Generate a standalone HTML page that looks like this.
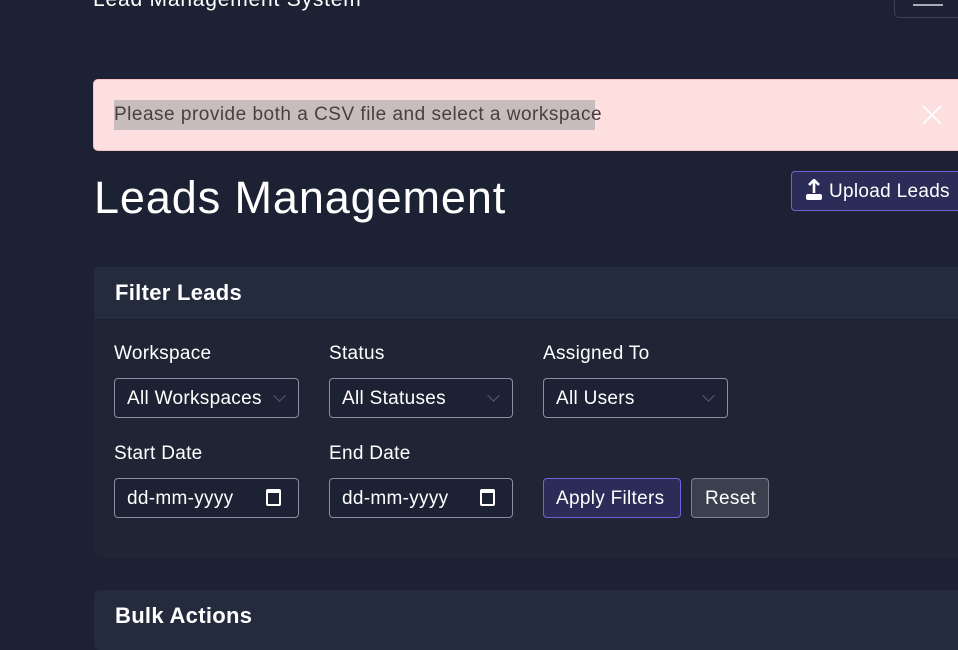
<!DOCTYPE html>
<html><head><style>
*{box-sizing:border-box;margin:0;padding:0}
body{width:958px;height:637px;overflow:hidden;background:#1c2233;font-family:"Liberation Sans",sans-serif;color:#fff;position:relative;letter-spacing:0.3px}
.abs{position:absolute}
.sel,.inp{position:absolute;height:40px;border:1px solid #8a90a0;border-radius:4px;background:#1c2233;font-size:19px;color:#fff;padding:9px 12px;white-space:nowrap;overflow:hidden}
.lbl{position:absolute;font-size:19px;color:#fff}
.chev{position:absolute;right:14px;top:12px;width:9px;height:9px;border-right:1.5px solid #555c6b;border-bottom:1.5px solid #555c6b;transform:rotate(45deg)}
.cal{position:absolute;right:17px;top:10px;width:15px;height:17px;border:2px solid #fff;border-top-width:4px;border-radius:2px}
</style></head><body>
<div class="abs" style="left:93px;top:-12px;font-size:21px;letter-spacing:0.8px">Lead Management System</div>
<div class="abs" style="left:894px;top:-20px;width:80px;height:38px;border:1px solid #3a4152;border-radius:5px"></div>
<div class="abs" style="left:913px;top:4px;width:30px;height:2px;background:#aab"></div>
<div class="abs" style="left:93px;top:79px;width:880px;height:72px;background:#fddfe0;border:1px solid #f3c2c5;border-radius:5px"></div>
<div class="abs" style="left:114px;top:100px;height:30px;width:481px;background:#c8bcbc;color:#4a3f3f;font-size:19px;padding-top:4px;letter-spacing:0.5px;white-space:nowrap">Please provide both a CSV file and select a workspace</div>
<svg class="abs" style="left:922px;top:105px" width="20" height="20" viewBox="0 0 20 20"><path d="M1 1L19 19M19 1L1 19" stroke="#fff" stroke-width="1.6"/></svg>
<div class="abs" style="left:94px;top:172px;font-size:45px;letter-spacing:0.9px">Leads Management</div>
<div class="abs" style="left:791px;top:171px;width:180px;height:40px;background:#2c2c58;border:1px solid #6e64d8;border-radius:4px;font-size:19px;padding:9px 0 0 37px;white-space:nowrap">Upload Leads</div>
<svg class="abs" style="left:803px;top:179px" width="22" height="24" viewBox="0 0 22 24"><path d="M11 1v13M6 6l5-5 5 5" stroke="#fff" stroke-width="2.6" fill="none"/><rect x="3" y="15" width="16" height="6" rx="2" fill="#fff"/></svg>
<div class="abs" style="left:94px;top:267px;width:880px;height:291px;background:#1f2535;border-radius:5px"></div>
<div class="abs" style="left:94px;top:267px;width:880px;height:51px;background:#242b3c;border-radius:5px 5px 0 0;border-bottom:1px solid #2d3446"></div>
<div class="abs" style="left:115px;top:280px;font-size:22px;font-weight:bold">Filter Leads</div>
<div class="lbl" style="left:114px;top:343px">Workspace</div>
<div class="lbl" style="left:329px;top:343px">Status</div>
<div class="lbl" style="left:543px;top:343px">Assigned To</div>
<div class="sel" style="left:114px;top:378px;width:185px">All Workspaces<div class="chev"></div></div>
<div class="sel" style="left:329px;top:378px;width:184px">All Statuses<div class="chev"></div></div>
<div class="sel" style="left:543px;top:378px;width:185px">All Users<div class="chev"></div></div>
<div class="lbl" style="left:114px;top:443px">Start Date</div>
<div class="lbl" style="left:329px;top:443px">End Date</div>
<div class="inp" style="left:114px;top:478px;width:185px">dd-mm-yyyy<div class="cal"></div></div>
<div class="inp" style="left:329px;top:478px;width:184px">dd-mm-yyyy<div class="cal"></div></div>
<div class="abs" style="left:543px;top:478px;width:138px;height:40px;background:#2c2c58;border:1px solid #6e64d8;border-radius:4px;font-size:19px;padding:9px 0 0 12px;white-space:nowrap">Apply Filters</div>
<div class="abs" style="left:691px;top:478px;width:78px;height:40px;background:#3a404e;border:1px solid #7c8290;border-radius:4px;font-size:19px;padding:9px 0 0 13px">Reset</div>
<div class="abs" style="left:94px;top:590px;width:880px;height:60px;background:#242b3c;border-radius:5px"></div>
<div class="abs" style="left:115px;top:603px;font-size:22px;font-weight:bold">Bulk Actions</div>
</body></html>
